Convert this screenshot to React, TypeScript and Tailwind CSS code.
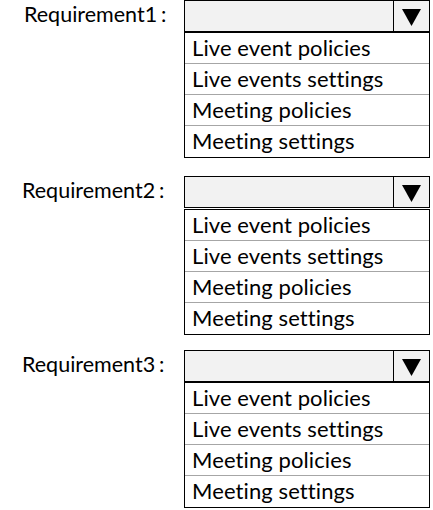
const OPTIONS = [
  "Live event policies",
  "Live events settings",
  "Meeting policies",
  "Meeting settings",
];

const BLOCKS = [
  { name: "Requirement1", wrap: "pt-0", labelPad: "pl-[24px]", gap: "mt-0" },
  { name: "Requirement2", wrap: "pt-[18px]", labelPad: "pl-[22px]", gap: "mt-[1px]" },
  { name: "Requirement3", wrap: "pt-[15px]", labelPad: "pl-[22px]", gap: "mt-0" },
];

function Dropdown({ gap }: { gap: string }) {
  return (
    <div className="w-[246px]">
      <div className="flex h-[32px] border border-black bg-[#f2f2f2]">
        <div className="flex-1" />
        <div className="flex w-[36px] items-center justify-center border-l border-black pt-[2px]">
          <svg width="19" height="17" viewBox="0 0 19 17">
            <path d="M0 0 H19 L9.5 17 Z" fill="#000" />
          </svg>
        </div>
      </div>
      <div className={`${gap} border border-black bg-white`}>
        {OPTIONS.map((o, i) => (
          <div
            key={o}
            className={`h-[31px] pl-[7px] text-[22px] leading-[29px] tracking-[0.1px] text-black ${
              i < OPTIONS.length - 1 ? "border-b border-[#a6a6a6]" : ""
            }`}
          >
            {o}
          </div>
        ))}
      </div>
    </div>
  );
}

export default function App() {
  return (
    <div className="h-[510px] w-[433px] overflow-hidden bg-white font-['Lato',sans-serif]">
      {BLOCKS.map((b) => (
        <div key={b.name} className={`flex ${b.wrap}`}>
          <div className={`w-[184px] ${b.labelPad} text-[21.5px] leading-[28px] text-black`}>
            {b.name}
            <span className="ml-[4px]">:</span>
          </div>
          <Dropdown gap={b.gap} />
        </div>
      ))}
    </div>
  );
}
